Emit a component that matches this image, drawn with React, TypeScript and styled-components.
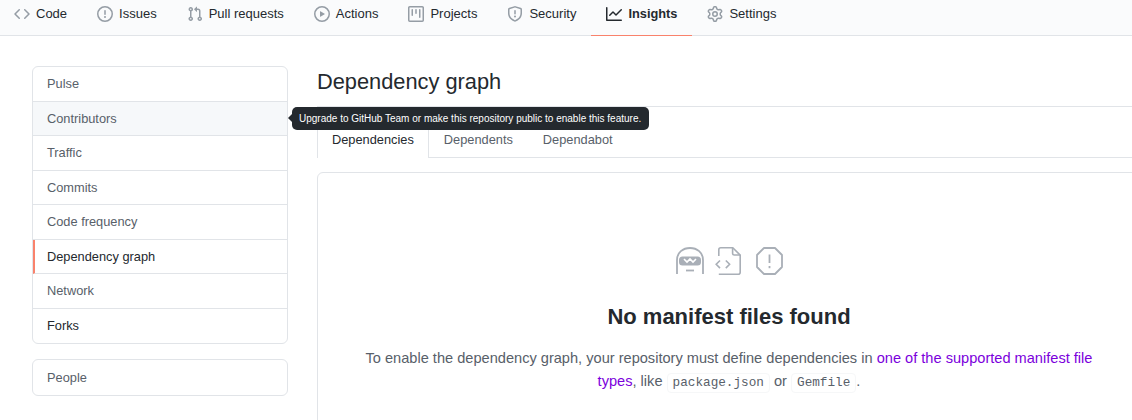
import styled, { createGlobalStyle } from "styled-components";

const ICONS: Record<string, string> = {
  code: "m11.28 3.22 4.25 4.25a.75.75 0 0 1 0 1.06l-4.25 4.25a.749.749 0 0 1-1.275-.326.749.749 0 0 1 .215-.734L13.94 8l-3.72-3.72a.749.749 0 0 1 .326-1.275.749.749 0 0 1 .734.215Zm-6.56 0a.751.751 0 0 1 1.042.018.751.751 0 0 1 .018 1.042L2.06 8l3.72 3.72a.749.749 0 0 1-.326 1.275.749.749 0 0 1-.734-.215L.47 8.53a.75.75 0 0 1 0-1.06Z",
  issue: "M8 1.5a6.5 6.5 0 100 13 6.5 6.5 0 000-13zM0 8a8 8 0 1116 0A8 8 0 010 8zm9 3a1 1 0 11-2 0 1 1 0 012 0zm-.25-6.25a.75.75 0 00-1.5 0v3.5a.75.75 0 001.5 0v-3.5z",
  pull: "M1.5 3.25a2.25 2.25 0 1 1 3 2.122v5.256a2.251 2.251 0 1 1-1.5 0V5.372A2.25 2.25 0 0 1 1.5 3.25Zm5.677-.177L9.573.677A.25.25 0 0 1 10 .854V2.5h1A2.5 2.5 0 0 1 13.5 5v5.628a2.251 2.251 0 1 1-1.5 0V5a1 1 0 0 0-1-1h-1v1.646a.25.25 0 0 1-.427.177L7.177 3.427a.25.25 0 0 1 0-.354ZM3.75 2.5a.75.75 0 1 0 0 1.5.75.75 0 0 0 0-1.5Zm0 9.5a.75.75 0 1 0 0 1.5.75.75 0 0 0 0-1.5Zm8.25.75a.75.75 0 1 0 1.5 0 .75.75 0 0 0-1.5 0Z",
  play: "M8 0a8 8 0 1 1 0 16A8 8 0 0 1 8 0ZM1.5 8a6.5 6.5 0 1 0 13 0 6.5 6.5 0 0 0-13 0Zm4.879-2.773 4.264 2.559a.25.25 0 0 1 0 .428l-4.264 2.559A.25.25 0 0 1 6 10.559V5.442a.25.25 0 0 1 .379-.215Z",
  project: "M1.75 0h12.5C15.216 0 16 .784 16 1.75v12.5A1.75 1.75 0 0 1 14.25 16H1.75A1.75 1.75 0 0 1 0 14.25V1.75C0 .784.784 0 1.75 0ZM1.5 1.75v12.5c0 .138.112.25.25.25h12.5a.25.25 0 0 0 .25-.25V1.75a.25.25 0 0 0-.25-.25H1.75a.25.25 0 0 0-.25.25ZM11.75 3a.75.75 0 0 1 .75.75v7.5a.75.75 0 0 1-1.5 0v-7.5a.75.75 0 0 1 .75-.75Zm-8.25.75a.75.75 0 0 1 1.5 0v5.5a.75.75 0 0 1-1.5 0ZM8 3a.75.75 0 0 1 .75.75v3.5a.75.75 0 0 1-1.5 0v-3.5A.75.75 0 0 1 8 3Z",
  shield: "M7.467.133a1.748 1.748 0 0 1 1.066 0l5.25 1.68A1.75 1.75 0 0 1 15 3.48V7c0 1.566-.32 3.182-1.303 4.682-.983 1.498-2.585 2.813-5.032 3.855a1.697 1.697 0 0 1-1.33 0c-2.447-1.042-4.049-2.357-5.032-3.855C1.32 10.182 1 8.566 1 7V3.48a1.75 1.75 0 0 1 1.217-1.667Zm.61 1.429a.25.25 0 0 0-.153 0l-5.25 1.68a.25.25 0 0 0-.174.238V7c0 1.358.275 2.666 1.057 3.86.784 1.194 2.121 2.34 4.366 3.297a.196.196 0 0 0 .154 0c2.245-.956 3.582-2.104 4.366-3.298C13.225 9.666 13.5 8.36 13.5 7V3.48a.251.251 0 0 0-.174-.237l-5.25-1.68ZM8.75 4.75v3a.75.75 0 0 1-1.5 0v-3a.75.75 0 0 1 1.5 0ZM9 10.5a1 1 0 1 1-2 0 1 1 0 0 1 2 0Z",
  graph: "M1.5 1.75V13.5h13.75a.75.75 0 0 1 0 1.5H.75a.75.75 0 0 1-.75-.75V1.75a.75.75 0 0 1 1.5 0Zm14.28 2.53-5.25 5.25a.75.75 0 0 1-1.06 0L7 7.06 4.28 9.78a.751.751 0 0 1-1.042-.018.751.751 0 0 1-.018-1.042l3.25-3.25a.75.75 0 0 1 1.06 0L10 7.94l4.72-4.72a.751.751 0 0 1 1.042.018.751.751 0 0 1 .018 1.042Z",
  gear: "M8 0a8.2 8.2 0 0 1 .701.031C9.444.095 9.99.645 10.16 1.29l.288 1.107c.018.066.079.158.212.224.231.114.454.243.668.386.123.082.233.09.299.071l1.103-.303c.644-.176 1.392.021 1.82.63.27.385.506.792.704 1.218.315.675.111 1.422-.364 1.891l-.814.806c-.049.048-.098.147-.088.294.016.257.016.515 0 .772-.01.147.038.246.088.294l.814.806c.475.469.679 1.216.364 1.891a7.977 7.977 0 0 1-.704 1.217c-.428.61-1.176.807-1.82.63l-1.102-.302c-.067-.019-.177-.011-.3.071a5.909 5.909 0 0 1-.668.386c-.133.066-.194.158-.211.224l-.29 1.106c-.168.646-.715 1.196-1.458 1.26a8.006 8.006 0 0 1-1.402 0c-.743-.064-1.289-.614-1.458-1.26l-.289-1.106c-.018-.066-.079-.158-.212-.224a5.738 5.738 0 0 1-.668-.386c-.123-.082-.233-.09-.299-.071l-1.103.303c-.644.176-1.392-.021-1.82-.63a8.12 8.12 0 0 1-.704-1.218c-.315-.675-.111-1.422.363-1.891l.815-.806c.05-.048.098-.147.088-.294a6.214 6.214 0 0 1 0-.772c.01-.147-.038-.246-.088-.294l-.815-.806C.635 6.045.431 5.298.746 4.623a7.92 7.92 0 0 1 .704-1.217c.428-.61 1.176-.807 1.82-.63l1.102.302c.067.019.177.011.3-.071.214-.143.437-.272.668-.386.133-.066.194-.158.211-.224l.29-1.106C6.009.645 6.556.095 7.299.03 7.53.01 7.764 0 8 0Zm-.571 1.525c-.036.003-.108.036-.137.146l-.289 1.105c-.147.561-.549.967-.998 1.189-.173.086-.34.183-.5.29-.417.278-.97.423-1.529.27l-1.103-.303c-.109-.03-.175.016-.195.045-.22.312-.412.644-.573.99-.014.031-.021.11.059.19l.815.806c.411.406.562.957.53 1.456a4.709 4.709 0 0 0 0 .582c.032.499-.119 1.05-.53 1.456l-.815.806c-.081.08-.073.159-.059.19.162.346.353.677.573.989.02.03.085.076.195.046l1.102-.303c.56-.153 1.113-.008 1.53.27.161.107.328.204.501.29.447.222.85.629.997 1.189l.289 1.105c.029.109.101.143.137.146a6.6 6.6 0 0 0 1.142 0c.036-.003.108-.036.137-.146l.289-1.105c.147-.561.549-.967.998-1.189.173-.086.34-.183.5-.29.417-.278.97-.423 1.529-.27l1.103.303c.109.029.175-.016.195-.045.22-.313.411-.644.573-.99.014-.031.021-.11-.059-.19l-.815-.806c-.411-.406-.562-.957-.53-1.456a4.709 4.709 0 0 0 0-.582c-.032-.499.119-1.05.53-1.456l.815-.806c.081-.08.073-.159.059-.19a6.464 6.464 0 0 0-.573-.989c-.02-.03-.085-.076-.195-.046l-1.102.303c-.56.153-1.113.008-1.53-.27a4.44 4.44 0 0 0-.501-.29c-.447-.222-.85-.629-.997-1.189l-.289-1.105c-.029-.11-.101-.143-.137-.146a6.6 6.6 0 0 0-1.142 0ZM11 8a3 3 0 1 1-6 0 3 3 0 0 1 6 0ZM9.5 8a1.5 1.5 0 1 0-3.001.001A1.5 1.5 0 0 0 9.5 8Z",
};

const NAV = [
  { label: "Code", icon: "code" },
  { label: "Issues", icon: "issue" },
  { label: "Pull requests", icon: "pull" },
  { label: "Actions", icon: "play" },
  { label: "Projects", icon: "project" },
  { label: "Security", icon: "shield" },
  { label: "Insights", icon: "graph", active: true },
  { label: "Settings", icon: "gear" },
];

const GlobalStyle = createGlobalStyle`
  html, body {
    margin: 0;
    background: #fff;
  }
  body {
    font-family: "Liberation Sans", Arial, sans-serif;
    color: #24292e;
  }
  #root {
    width: 1132px;
    height: 420px;
    overflow: hidden;
  }
`;

function Icon({ name }: { name: string }) {
  return (
    <St.Svg width={16} height={16} viewBox="0 0 16 16" fill="currentColor">
      <path fillRule="evenodd" d={ICONS[name]} />
    </St.Svg>
  );
}

export default function App() {
  return (
    <>
      <GlobalStyle />
      <St.TopNav>
        {NAV.map((item) => (
          <St.NavItem key={item.label} $active={item.active}>
            <Icon name={item.icon} />
            {item.label}
          </St.NavItem>
        ))}
      </St.TopNav>

      <St.Page>
        <St.Sidebar>
          <St.Menu>
            <St.MenuItem>Pulse</St.MenuItem>
            <St.MenuItem $hover>
              Contributors
              <St.Tooltip>Upgrade to GitHub Team or make this repository public to enable this feature.</St.Tooltip>
            </St.MenuItem>
            <St.MenuItem>Traffic</St.MenuItem>
            <St.MenuItem>Commits</St.MenuItem>
            <St.MenuItem>Code frequency</St.MenuItem>
            <St.MenuItem $selected>Dependency graph</St.MenuItem>
            <St.MenuItem>Network</St.MenuItem>
            <St.MenuItem $dark>Forks</St.MenuItem>
          </St.Menu>
          <St.Menu>
            <St.MenuItem>People</St.MenuItem>
          </St.Menu>
        </St.Sidebar>

        <St.Main>
          <St.Title>Dependency graph</St.Title>
          <St.Tabs>
            <St.Tab $active>Dependencies</St.Tab>
            <St.Tab>Dependents</St.Tab>
            <St.Tab>Dependabot</St.Tab>
          </St.Tabs>
          <St.Blank>
            <St.BlankIcons>
              {/* hubot */}
              <svg width="30" height="28" viewBox="0 0 30 28" fill="none" stroke="currentColor" strokeWidth="1.8">
                <path d="M2 27V13C2 5.5 8 1 15 1s13 4.5 13 12v14" />
                <rect x="4" y="9.5" width="22" height="9" rx="3.5" fill="currentColor" stroke="none" />
                <path d="M9 12l3 3 3-3 3 3 3-3" stroke="#fff" strokeWidth="1.6" />
                <path d="M11 23.5h8" />
              </svg>
              {/* file with code brackets */}
              <svg width="26" height="28" viewBox="0 0 26 28" fill="none" stroke="currentColor" strokeWidth="1.6">
                <path d="M3.8 9V2.8a2 2 0 0 1 2-2h12l7.4 7.4v17a2 2 0 0 1-2 2H3.8" />
                <path d="M17.6 1v5.4a1.6 1.6 0 0 0 1.6 1.6h6" />
                <path d="M5 13.5L1.2 17.3 5 21.1M10.8 13.5l3.8 3.8-3.8 3.8" />
              </svg>
              {/* octagon alert */}
              <svg width="27" height="28" viewBox="0 0 27 28" fill="none" stroke="currentColor" strokeWidth="1.8">
                <path d="M8 1h11l7 7v12l-7 7H8l-7-7V8z" strokeLinejoin="round" />
                <path d="M13.5 7.5v8.5" />
                <path d="M13.5 19v2.2" />
              </svg>
            </St.BlankIcons>
            <St.BlankTitle>No manifest files found</St.BlankTitle>
            <St.BlankText>
              To enable the dependency graph, your repository must define dependencies in{" "}
              <St.Link>one of the supported manifest file types</St.Link>, like <St.Code>package.json</St.Code> or{" "}
              <St.Code>Gemfile</St.Code>.
            </St.BlankText>
          </St.Blank>
        </St.Main>
      </St.Page>
    </>
  );
}

const St = {
  Svg: styled.svg`
    display: block;
    flex-shrink: 0;
  `,
  TopNav: styled.nav`
    height: 36px;
    box-sizing: border-box;
    display: flex;
    margin-left: -1px;
    background: #fafbfc;
    border-bottom: 1px solid #e1e4e8;
  `,
  NavItem: styled.a<{ $active?: boolean }>`
    height: 36px;
    box-sizing: border-box;
    display: flex;
    align-items: center;
    gap: 6px;
    padding: 0 15px 8px;
    font-size: ${({ $active }) => ($active ? "12.8px" : "13px")};
    font-weight: ${({ $active }) => ($active ? 700 : 400)};
    color: #24292e;
    border-bottom: 1px solid ${({ $active }) => ($active ? "#f9826c" : "transparent")};

    svg {
      color: ${({ $active }) => ($active ? "#24292e" : "#959da5")};
    }
  `,
  Page: styled.div`
    display: flex;
    gap: 29px;
    padding: 30px 0 0 32px;
  `,
  Sidebar: styled.aside`
    width: 256px;
    flex-shrink: 0;
    display: flex;
    flex-direction: column;
    gap: 15px;
  `,
  Menu: styled.ul`
    margin: 0;
    padding: 0;
    list-style: none;
    border: 1px solid #e1e4e8;
    border-radius: 6px;
  `,
  MenuItem: styled.li<{ $hover?: boolean; $selected?: boolean; $dark?: boolean }>`
    position: relative;
    height: 34.5px;
    box-sizing: border-box;
    display: flex;
    align-items: center;
    padding-left: ${({ $selected }) => ($selected ? "12px" : "14px")};
    font-size: 12.8px;
    color: ${({ $selected, $dark }) => ($selected || $dark ? "#24292e" : "#586069")};
    background: ${({ $hover }) => ($hover ? "#f6f8fa" : "transparent")};
    border-left: ${({ $selected }) => ($selected ? "2px solid #f9826c" : "none")};

    &:not(:last-child) {
      border-bottom: 1px solid #e1e4e8;
    }
  `,
  Tooltip: styled.span`
    position: absolute;
    z-index: 2;
    left: 259px;
    top: 5px;
    height: 23px;
    box-sizing: border-box;
    display: flex;
    align-items: center;
    padding: 0 8px 0 7px;
    white-space: nowrap;
    font-size: 10px;
    color: #fff;
    background: #24292e;
    border-radius: 5px;

    &::before {
      content: "";
      position: absolute;
      left: -4px;
      top: 7px;
      border-style: solid;
      border-width: 4px 4px 4px 0;
      border-color: transparent #24292e transparent transparent;
    }
  `,
  Main: styled.main`
    width: 824px;
    flex-shrink: 0;
  `,
  Title: styled.h1`
    margin: 0;
    height: 41px;
    box-sizing: border-box;
    padding-top: 2px;
    font-size: 21.8px;
    line-height: 28px;
    font-weight: 400;
    color: #24292e;
    border-bottom: 1px solid #e1e4e8;
  `,
  Tabs: styled.div`
    height: 51px;
    box-sizing: border-box;
    display: flex;
    border-bottom: 1px solid #e1e4e8;
  `,
  Tab: styled.a<{ $active?: boolean }>`
    height: 51px;
    box-sizing: border-box;
    display: flex;
    align-items: center;
    padding: 13px 14px 0;
    font-size: 12.8px;
    color: ${({ $active }) => ($active ? "#24292e" : "#586069")};
    background: ${({ $active }) => ($active ? "#fff" : "transparent")};
    border-left: 1px solid ${({ $active }) => ($active ? "#e1e4e8" : "transparent")};
    border-right: 1px solid ${({ $active }) => ($active ? "#e1e4e8" : "transparent")};
  `,
  Blank: styled.section`
    margin-top: 14px;
    height: 320px;
    box-sizing: border-box;
    padding: 74px 40px 0;
    text-align: center;
    border: 1px solid #e1e4e8;
    border-radius: 6px;
  `,
  BlankIcons: styled.div`
    display: flex;
    justify-content: center;
    align-items: center;
    gap: 10px;
    height: 28px;
    color: #a9afb7;

    svg:last-child {
      margin-left: 5px;
    }
  `,
  BlankTitle: styled.h3`
    margin: 25px 0 0;
    font-size: 22px;
    line-height: 34px;
    font-weight: 700;
    color: #24292e;
  `,
  BlankText: styled.p`
    margin: 13px 0 0;
    font-size: 14.6px;
    line-height: 23px;
    color: #586069;
  `,
  Link: styled.a`
    color: #7b00dc;
  `,
  Code: styled.code`
    display: inline-block;
    box-sizing: border-box;
    height: 20px;
    padding: 0 5px;
    font-family: "Liberation Mono", monospace;
    font-size: 12.7px;
    line-height: 18px;
    color: #586069;
    background: #fff;
    border: 1px solid #f6f7f8;
    border-radius: 4px;
  `,
};
